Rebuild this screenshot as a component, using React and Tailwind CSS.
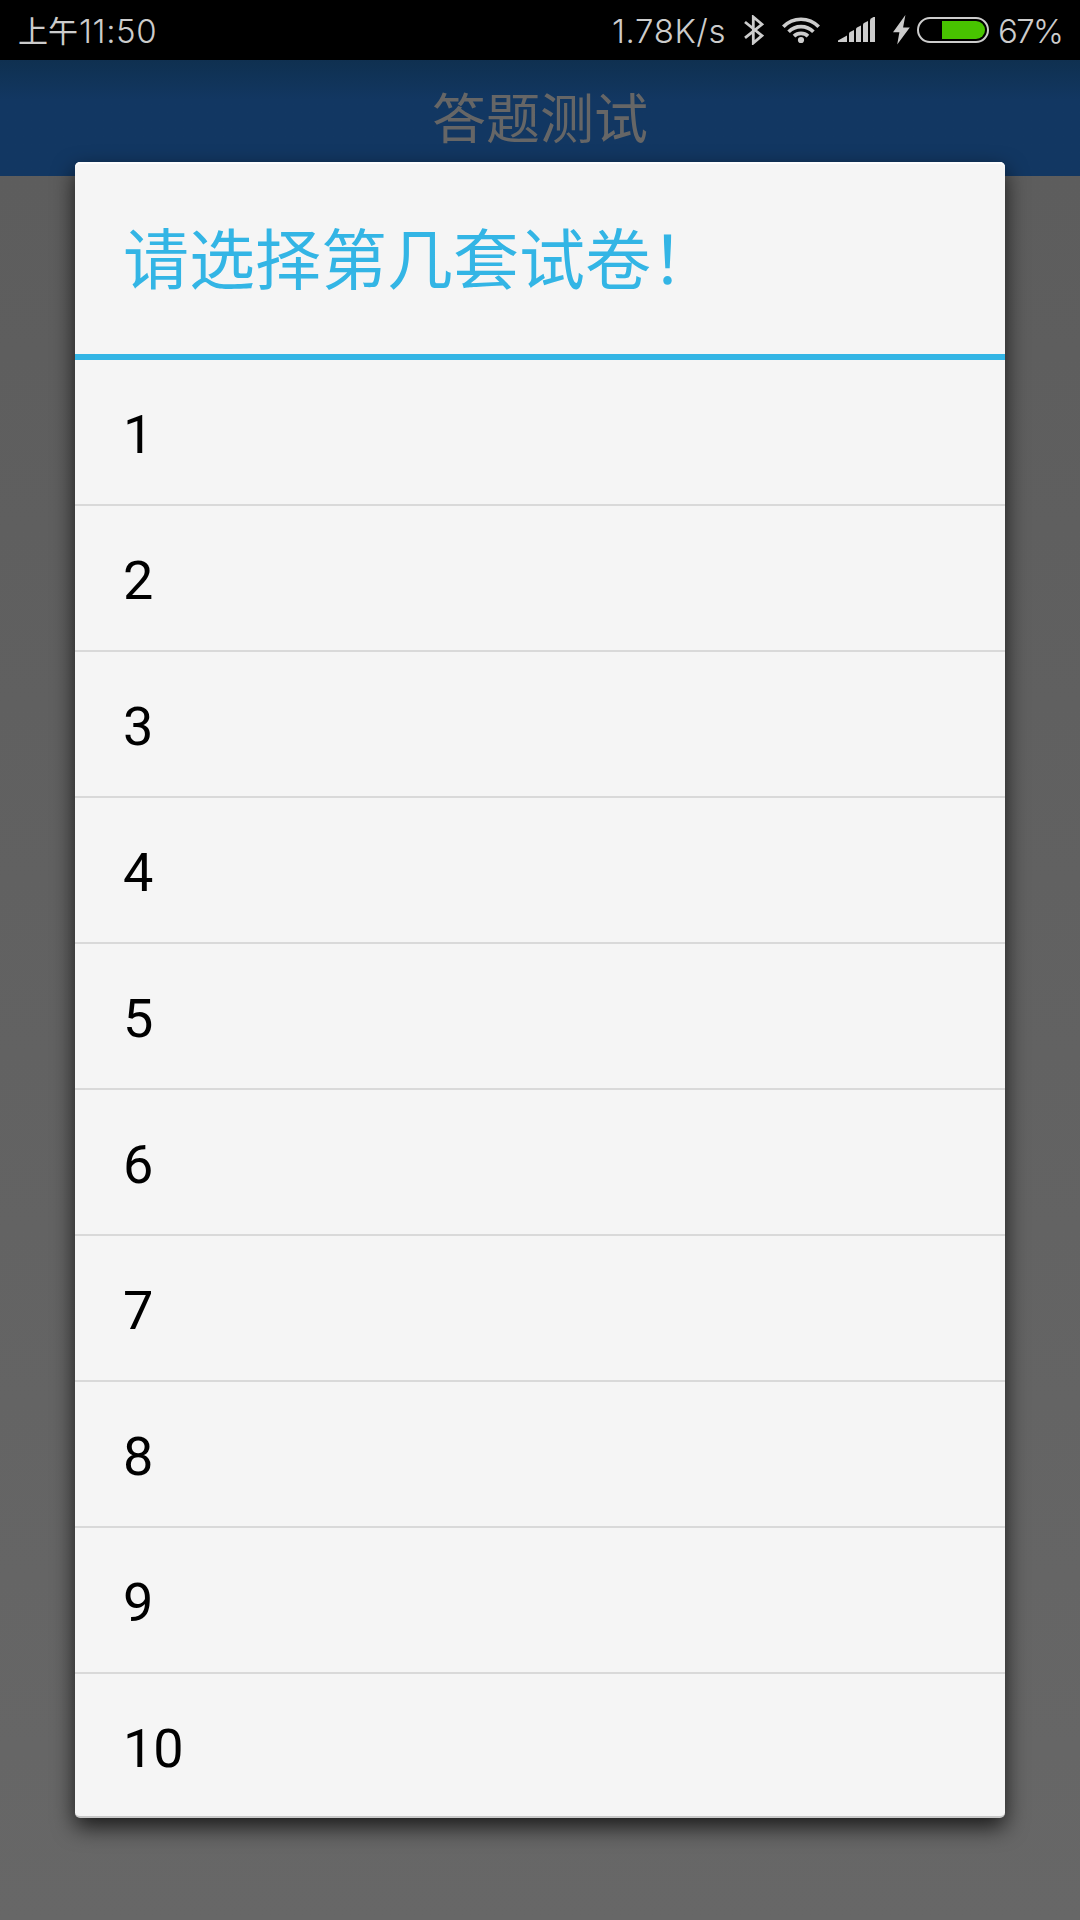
import React from "react";

const papers = ["1", "2", "3", "4", "5", "6", "7", "8", "9", "10"];

function Bluetooth() {
  return (
    <svg className="ml-[18px] h-[30px] w-[20px] shrink-0" viewBox="0 0 20 30" fill="none" stroke="#cccccc" strokeWidth="2.8">
      <path d="M1 7 L18 20.6 L9.3 28 V2 L18 9.3 L1 22.8" />
    </svg>
  );
}

function Wifi() {
  return (
    <svg className="ml-[18px] h-[28px] w-[38px] shrink-0" viewBox="0 0 38 28" fill="none" stroke="#cccccc" strokeWidth="3.7">
      <path d="M1.3 10.8 A24.5 24.5 0 0 1 36.7 10.8" />
      <path d="M6.6 15.8 A17.5 17.5 0 0 1 31.4 15.8" />
      <path d="M12 20.2 A10.2 10.2 0 0 1 26 20.2" />
      <circle cx="19" cy="24" r="3.1" fill="#cccccc" stroke="none" />
    </svg>
  );
}

function Signal() {
  return (
    <svg className="ml-[18px] h-[26px] w-[38px] shrink-0" viewBox="0 0 38 26" fill="#cccccc">
      <path d="M0 25 V23.5 L9 18.6 V25Z" />
      <path d="M11 25 V16.5 Q11 15.6 12 15 L16 13 V25Z" />
      <path d="M18 25 V12.2 Q18 11.3 19 10.6 L23 8.5 V25Z" />
      <path d="M25 25 V7.8 Q25 6.8 26 6 L30 4 V25Z" />
      <path d="M32 25 V3.6 Q32 2.4 33 1.6 L35.5 0 H37 V25Z" />
    </svg>
  );
}

function Bolt() {
  return (
    <svg className="ml-[17px] h-[30px] w-[18px] shrink-0" viewBox="0 0 18 30" fill="#cccccc">
      <path d="M12.4 0 L0 17.3 H6.4 L4.2 29.5 L16.8 12.4 H10.1Z" />
    </svg>
  );
}

function Battery() {
  return (
    <svg className="ml-[6px] h-[26px] w-[72px] shrink-0" viewBox="0 0 72 26" fill="none">
      <rect x="1" y="1" width="70" height="24" rx="12" stroke="#cccccc" strokeWidth="2" />
      <path d="M25 4 H59 A9 9 0 0 1 59 22 H25Z" fill="#48c400" />
    </svg>
  );
}

function StatusBar() {
  return (
    <div className="flex h-[60px] items-center bg-black text-[33px] leading-[60px] font-light whitespace-nowrap text-[#cccccc] font-[Inter,sans-serif]">
      <div className="ml-[18px] flex w-[140px] items-center">
        <span className="pb-[2px] text-[30px] leading-[58px] font-normal font-['Noto_Sans_CJK_SC',sans-serif]">上午</span>
        <span className="pt-[2px] pl-px leading-[58px] tracking-[0.6px]">11:50</span>
      </div>
      <div className="ml-auto flex items-center pr-[18px]">
        <span className="w-[114px] pt-[2px] leading-[58px] tracking-[0.6px]">1.78K/s</span>
        <Bluetooth />
        <Wifi />
        <Signal />
        <Bolt />
        <Battery />
        <span className="ml-[9px] w-[64px] pt-[2px] leading-[58px] -tracking-[1.6px]">67%</span>
      </div>
    </div>
  );
}

export default function App() {
  return (
    <div className="flex h-[1920px] w-[1080px] flex-col overflow-hidden bg-linear-to-b from-[#5c5c5c] to-[#676767] font-[Roboto,'Noto_Sans_CJK_SC',sans-serif]">
      <StatusBar />
      <header className="h-[116px] shrink-0 bg-linear-to-b from-[#0f3050] to-[#123762] to-35% text-center text-[54px] text-[#666666] font-['Noto_Sans_CJK_SC',sans-serif]">
        <span className="block h-[112px] leading-[112px]">答题测试</span>
      </header>
      <main className="relative mx-[75px] -mt-[14px] h-[1656px] shrink-0 rounded-[5px] border-b-2 border-[#c8c8c8] bg-[#f5f5f5] shadow-[0_9px_22px_rgba(0,0,0,0.75),inset_0_2px_0_#fdfdfd]">
        <h1 className="h-[198px] border-b-[6px] border-[#33b5e5] pt-[4px] pl-[48px] text-[66px] leading-[192px] text-[#33b5e5]">
          请选择第几套试卷！
        </h1>
        <ul className="divide-y-2 divide-[#d9d9d9]">
          {papers.map((paper) => (
            <li key={paper} className="h-[146px] pt-[2px] pl-[48px] text-[54px] leading-[146px] text-black last:h-[142px]">
              {paper}
            </li>
          ))}
        </ul>
      </main>
    </div>
  );
}
